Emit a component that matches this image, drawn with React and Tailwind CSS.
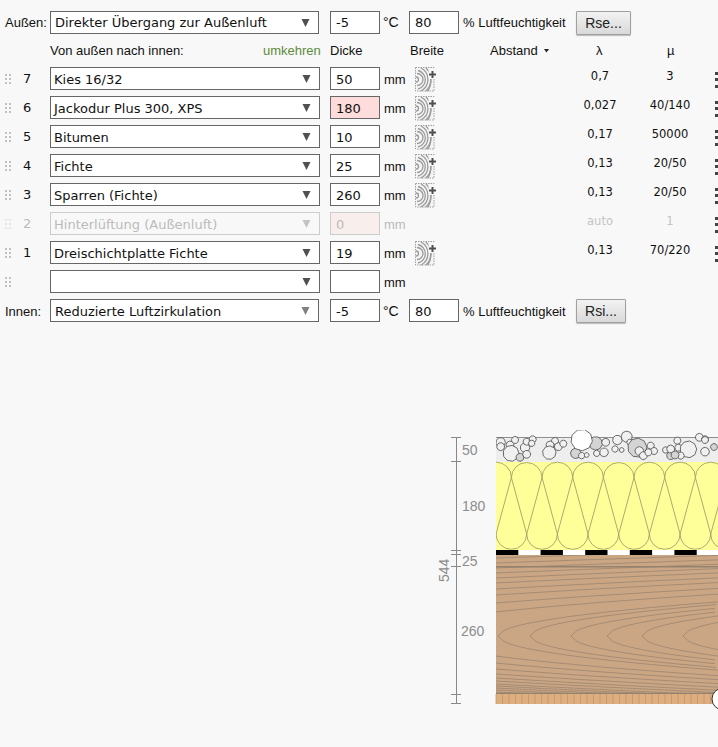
import React from "react";

const arial = "font-[Liberation_Sans,Arial,sans-serif]";
const verdana = "font-[DejaVu_Sans,Verdana,sans-serif]";

const layers = [
  { n: "7", name: "Kies 16/32", d: "50", l: "0,7", m: "3", icon: true },
  { n: "6", name: "Jackodur Plus 300, XPS", d: "180", l: "0,027", m: "40/140", icon: true, warn: true },
  { n: "5", name: "Bitumen", d: "10", l: "0,17", m: "50000", icon: true },
  { n: "4", name: "Fichte", d: "25", l: "0,13", m: "20/50", icon: true },
  { n: "3", name: "Sparren (Fichte)", d: "260", l: "0,13", m: "20/50", icon: true },
  { n: "2", name: "Hinterlüftung (Außenluft)", d: "0", l: "auto", m: "1", off: true },
  { n: "1", name: "Dreischichtplatte Fichte", d: "19", l: "0,13", m: "70/220", icon: true },
  { n: "", name: "", d: "", empty: true },
];

function Arrow({ className }) {
  return (
    <svg width="9" height="8" viewBox="0 0 9 8" className={className}>
      <polygon points="0.5,0 8.5,0 4.5,8" fill="currentColor" />
    </svg>
  );
}

function Select({ text, off, width, pad, arrow, low }) {
  return (
    <div
      className={`flex h-[23px] items-center justify-between border pr-[8px] text-[13px] ${verdana} ${width} ${pad} ${
        off ? "border-[#cccccc] bg-[#f8f8f8] text-[#bbbbbb]" : "border-[#666666] bg-white text-[#111111]"
      }`}
    >
      <span className={`whitespace-nowrap ${low ? "pt-[2px]" : ""}`}>{text}</span>
      <Arrow className={off ? "text-[#c4c4c4]" : arrow || "text-[#505050]"} />
    </div>
  );
}

function Field({ value, warn, off, low, className = "ml-[10px]" }) {
  let tone = "border-[#666666] bg-white text-[#111111]";
  if (warn) tone = "border-[#666666] bg-[#ffdcdc] text-[#111111]";
  if (off) tone = "border-[#cccccc] bg-[#f8eeec] text-[#bbbbbb]";
  return (
    <input
      readOnly
      value={value}
      className={`h-[23px] w-[50px] border px-[5px] text-[13px] outline-none ${low ? "pt-[2px]" : ""} ${verdana} ${tone} ${className}`}
    />
  );
}

function Handle({ off }) {
  const c = off ? "bg-[#e6e6e6]" : "bg-[#c2c2c2]";
  return (
    <div className="grid w-[6px] grid-cols-2 gap-x-[2px] gap-y-[2px]">
      {[0, 1, 2, 3, 4, 5].map((i) => (
        <span key={i} className={`h-[2px] w-[2px] ${c}`} />
      ))}
    </div>
  );
}

function Kebab() {
  return (
    <div className="absolute left-[714.5px] top-[4.5px] flex flex-col gap-[3.5px]">
      {[0, 1, 2].map((i) => (
        <span key={i} className="h-[3px] w-[4px] bg-[#444444]" />
      ))}
    </div>
  );
}

function GrainIcon() {
  return (
    <svg width="22" height="25" viewBox="0 0 22 25" className="absolute left-[415px] top-0">
      <rect x="0.5" y="0.5" width="18.5" height="23.5" fill="#f4f4f4" stroke="#a0a0a0" strokeDasharray="1.5 1" />
      <g fill="none" stroke="#9a9a9a" strokeWidth="1.3">
        <path d="M1 10 A2.5 2.5 0 0 1 1 15" />
        <path d="M2 6.5 A6 6 0 0 1 2 18.5" />
        <path d="M3 3.5 A9.5 9.5 0 0 1 3 22" />
        <path d="M6 1 A13 13 0 0 1 6 24" />
        <path d="M11 1 A16 16 0 0 1 11 24" />
        <path d="M15 8 A20 20 0 0 1 13 24" />
      </g>
      <rect x="13.5" y="2" width="8.5" height="10" fill="#f8f8f8" />
      <path d="M17.5 4 V11 M14 7.5 H21" stroke="#505050" strokeWidth="2" />
    </svg>
  );
}

function Row({ row }) {
  const { n, name, d, l, m, icon, warn, off } = row;
  return (
    <div className="relative mb-[6px] flex h-[23px] items-center">
      <div className="ml-[5px] w-[15px]">
        <Handle off={off} />
      </div>
      <div className={`w-[30px] pl-[3px] text-[13px] ${verdana} ${off ? "text-[#bbbbbb]" : "text-[#111111]"}`}>{n}</div>
      <Select text={name} off={off} low width="w-[270px]" pad="pl-[3px]" />
      <Field value={d} warn={warn} off={off} low />
      <span className={`ml-[4px] pt-[2px] text-[13px] ${arial} ${off ? "text-[#bbbbbb]" : "text-[#111111]"}`}>mm</span>
      {icon && <GrainIcon />}
      {l && (
        <div className={`absolute left-[560px] top-[1px] h-[17px] w-[80px] text-center text-[11.5px] leading-[17px] ${verdana} ${off ? "text-[#c4c4c4]" : "text-[#111111]"}`}>{l}</div>
      )}
      {m && (
        <div className={`absolute left-[630px] top-[1px] h-[17px] w-[80px] text-center text-[11.5px] leading-[17px] ${verdana} ${off ? "text-[#c4c4c4]" : "text-[#111111]"}`}>{m}</div>
      )}
      {!row.empty && <Kebab />}
    </div>
  );
}

function ClimateRow({ label, text, btn, btnW, arrow, low }) {
  const drop = low ? "pt-[2px]" : "";
  return (
    <div className="relative flex h-[23px] items-center">
      <span className={`w-[50px] pl-[5px] text-[13px] ${drop} ${arial} text-[#111111]`}>{label}</span>
      <Select text={text} low={low} width="w-[269px]" pad="pl-[4px]" arrow={arrow} />
      <Field value="-5" low={low} className="ml-[11px]" />
      <span className={`ml-[3px] w-[26px] text-[14px] ${drop} ${arial} text-[#111111]`}>°C</span>
      <Field value="80" low={low} className="" />
      <span className={`ml-[4px] whitespace-nowrap text-[13px] ${drop} ${arial} text-[#111111]`}>% Luftfeuchtigkeit</span>
      <button
        className={`absolute left-[576px] top-0 h-[24px] rounded-[1px] border border-[#a0a0a0] bg-gradient-to-b from-[#f2f2f2] to-[#d9d9d9] text-[14px] text-[#222222] shadow-[0_1px_1px_rgba(0,0,0,0.25)] ${arial} ${btnW}`}
      >
        {btn}
      </button>
    </div>
  );
}

const stones = [
  [212, 52, 12], [212, 65, 10], [240, 60, 10], [255, 45, 9], [243, 85, 20], [270, 97, 10, 1], [285, 68, 12],
  [290, 50, 9], [290, 88, 10], [308, 43, 9], [305, 55, 8], [375, 48, 9], [360, 60, 10], [358, 83, 17],
  [385, 65, 10], [400, 56, 9], [497, 55, 17, 1], [437, 85, 13, 1], [455, 92, 8], [470, 90, 6], [455, 45, 27, 2],
  [522, 82, 11], [527, 52, 10], [500, 85, 8], [562, 45, 12], [590, 35, 14], [555, 72, 8], [575, 75, 6],
  [600, 52, 8], [622, 68, 24, 1], [628, 78, 11], [640, 92, 10], [662, 62, 9], [672, 78, 9], [655, 82, 9],
  [707, 75, 8], [722, 92, 10, 1], [722, 72, 10], [742, 47, 9], [745, 68, 9], [775, 73, 21], [752, 92, 9],
  [735, 90, 10, 1], [808, 37, 10], [825, 43, 9], [825, 80, 11],
];

function octagon(cx, cy, r) {
  const pts = [];
  for (let i = 0; i < 9; i++) {
    const a = (i * Math.PI * 2) / 9 + cx;
    pts.push(`${(cx + Math.cos(a) * r).toFixed(1)},${(cy + Math.sin(a) * r).toFixed(1)}`);
  }
  return pts.join(" ");
}

function insulationPath() {
  const P = 30.67, r = P / 2, yt = 477.5, yb = 534;
  let c = 526.7 - P * 2;
  let d = `M${(c + r).toFixed(2)} ${yt}`;
  for (let i = 0; i < 10; i++) {
    d += ` L${c.toFixed(2)} ${yb} A${r} ${r} 0 0 0 ${(c + P).toFixed(2)} ${yb}`;
    d += ` L${(c + r).toFixed(2)} ${yt} A${r} ${r} 0 0 1 ${(c + r + P).toFixed(2)} ${yt}`;
    c += P;
  }
  return d;
}

function grain(x0, sign, a, cy = 636) {
  let d = "";
  const start = Math.max(x0, 496);
  for (let x = start; x <= 720; x += 6) {
    const dy = a * Math.pow(Math.max(x - x0, 0), 0.5);
    d += `${d ? "L" : "M"}${x} ${(cy + sign * dy).toFixed(1)} `;
  }
  return d;
}

function Wall() {
  const tips = [498, 530, 571, 607, 642, 683, 715];
  const topEdge = [24, 33, 41, 47, 53, 58, 63, 68, 73, 78, 83];
  const botEdge = [20, 27, 33, 38, 42, 45, 48, 50, 52, 54, 56];
  const a = 2.3;
  const toX = (dy) => 496 - (dy / a) * (dy / a);
  const blacks = [];
  for (let x = 496; x < 718; x += 44.6) blacks.push(x);
  const ticks = [];
  for (let x = 496; x < 712; x += 6.5) ticks.push(x);
  return (
    <svg width="288" height="300" viewBox="430 425 288 300" className="absolute left-[430px] top-[425px]">
      <defs>
        <clipPath id="wood"><rect x="496" y="555" width="222" height="139" /></clipPath>
        <clipPath id="wall"><rect x="496" y="430" width="222" height="32" /></clipPath>
      </defs>

      <g stroke="#888888" strokeWidth="1">
        <path d="M456.5 437 V704" />
        {[437.5, 461.5, 550.5, 554.5, 566.5, 694.5, 703.5].map((y) => (
          <path key={y} d={`M451 ${y} H461`} />
        ))}
      </g>
      <g fill="#8c8c8c" fontSize="14" fontFamily="'Liberation Sans', Arial, sans-serif">
        <text x="462" y="455">50</text>
        <text x="462" y="511">180</text>
        <text x="462" y="566">25</text>
        <text x="461" y="636">260</text>
        <text x="0" y="0" transform="translate(449 582) rotate(-90)">544</text>
      </g>

      <rect x="496" y="437" width="222" height="25" fill="#eeeeee" />
      <path d="M496 437.5 H718" stroke="#8f8f8f" />
      <g clipPath="url(#wall)">
        {stones.map(([x, y, r, tone], i) => {
          const cx = 430 + x / 3, cy = 425 + y / 3;
          return (
            <polygon
              key={i}
              points={octagon(cx, cy, (r / 3) * 1.2)}
              fill={tone === 1 ? "#d4d4d4" : tone === 2 ? "#ffffff" : "#f0f0f0"}
              stroke="#5c5c5c"
              strokeWidth="0.9"
            />
          );
        })}
        <polygon points={octagon(705, 440, 3.5)} fill="#f0f0f0" stroke="#5c5c5c" strokeWidth="0.9" />
        <polygon points={octagon(714, 447, 3.5)} fill="#d4d4d4" stroke="#5c5c5c" strokeWidth="0.9" />
      </g>

      <rect x="496" y="462" width="222" height="88" fill="#ffff99" />
      <svg x="496" y="461" width="222" height="90" viewBox="496 461 222 90">
        <path d={insulationPath()} fill="none" stroke="#a3a16a" strokeWidth="0.9" />
      </svg>

      <rect x="496" y="550" width="222" height="5" fill="#ffffff" />
      {blacks.map((x) => (
        <rect key={x} x={x} y="550" width="22.3" height="5" fill="#000000" />
      ))}

      <rect x="496" y="555" width="222" height="139" fill="#cba684" />
      <g clipPath="url(#wood)" fill="none" stroke="#9b8570" strokeWidth="0.8">
        {tips.map((t) => (
          <path key={t} d={`${grain(t, -1, a)} M${t} 636 ${grain(t, 1, a).replace("M", "L")}`} />
        ))}
        {topEdge.map((dy) => <path key={dy} d={grain(toX(dy), -1, a)} />)}
        {botEdge.map((dy) => <path key={dy} d={grain(toX(dy), 1, a)} />)}
        <path d="M496 566.7 H718" stroke="#94826e" strokeWidth="1.4" />
        <path d="M496 693.5 H718" stroke="#94826e" strokeWidth="1.4" />
      </g>

      <rect x="496" y="694" width="222" height="10" fill="#dfae7e" />
      {ticks.map((x) => (
        <path key={x} d={`M${x} 694 V704`} stroke="#bb9671" strokeWidth="0.8" />
      ))}
      <circle cx="723" cy="699" r="11" fill="#ffffff" stroke="#333333" strokeWidth="1" />
    </svg>
  );
}

export default function App() {
  return (
    <div className={`relative h-[747px] w-[718px] overflow-hidden bg-[#f8f8f8] pt-[11px] ${arial}`}>
      <ClimateRow label="Außen:" text="Direkter Übergang zur Außenluft" btn="Rse..." btnW="w-[55px]" />

      <div className={`relative h-[33px] text-[13px] text-[#111111] ${arial}`}>
        <span className="absolute left-[50px] top-[7px]">Von außen nach innen:</span>
        <span className="absolute left-[263px] top-[7px] text-[#5b8a3c]">umkehren</span>
        <span className="absolute left-[330px] top-[7px]">Dicke</span>
        <span className="absolute left-[410px] top-[7px]">Breite</span>
        <span className="absolute left-[490px] top-[7px]">Abstand</span>
        <svg width="5" height="4" viewBox="0 0 5 4" className="absolute left-[544px] top-[15px]">
          <polygon points="0,0 5,0 2.5,3.5" fill="#222222" />
        </svg>
        <span className="absolute left-[596px] top-[7px]">λ</span>
        <span className="absolute left-[667px] top-[7px]">µ</span>
      </div>

      {layers.map((row, i) => (
        <Row key={i} row={row} />
      ))}

      <ClimateRow label="Innen:" text="Reduzierte Luftzirkulation" btn="Rsi..." btnW="w-[50px]" arrow="text-[#808080]" low />

      <Wall />
    </div>
  );
}
